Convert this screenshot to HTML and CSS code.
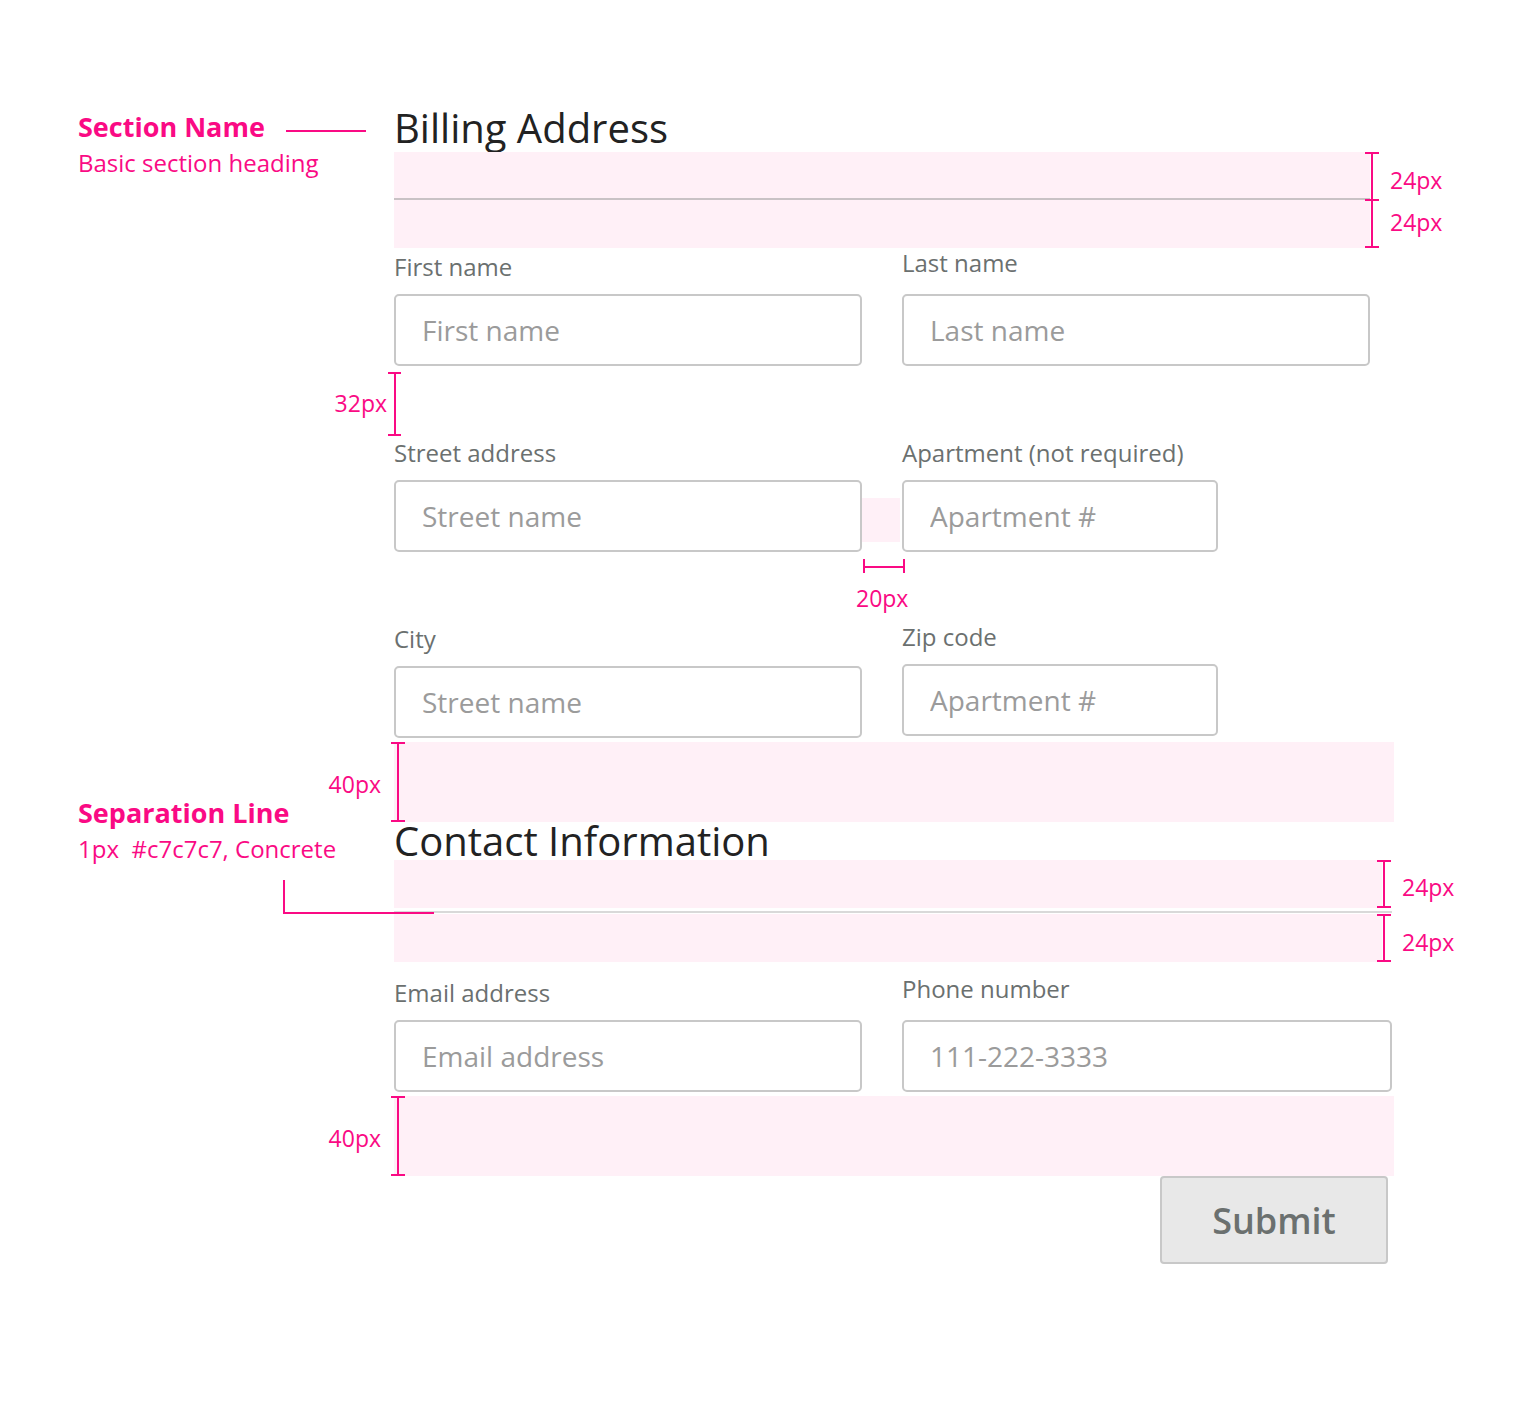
FILE: index.html
```html
<!DOCTYPE html>
<html lang="en">
<head>
<meta charset="utf-8">
<title>Form spec</title>
<link rel="stylesheet" href="styles.css">
</head>
<body>
<div class="canvas">
  <main class="form">
    <h2 class="section-title section-title--first">Billing Address</h2>
    <div class="divider">
      <div class="band band--46"></div>
      <div class="rule"></div>
      <div class="band band--48"></div>
    </div>

    <div class="row row--first">
      <div class="field">
        <label class="label">First name</label>
        <input class="input" placeholder="First name">
      </div>
      <div class="field">
        <label class="label label--up">Last name</label>
        <input class="input" placeholder="Last name">
      </div>
    </div>

    <div class="row">
      <div class="field">
        <label class="label">Street address</label>
        <input class="input" placeholder="Street name">
      </div>
      <div class="field">
        <label class="label">Apartment (not required)</label>
        <input class="input input--short" placeholder="Apartment #">
      </div>
    </div>

    <div class="row">
      <div class="field">
        <label class="label">City</label>
        <input class="input" placeholder="Street name">
      </div>
      <div class="field field--up">
        <label class="label">Zip code</label>
        <input class="input input--short" placeholder="Apartment #">
      </div>
    </div>

    <div class="band band--40"></div>

    <h2 class="section-title">Contact Information</h2>
    <div class="divider divider--wide">
      <div class="band band--48"></div>
      <div class="rule rule--light"></div>
      <div class="band band--48"></div>
    </div>

    <div class="row row--contact">
      <div class="field">
        <label class="label">Email address</label>
        <input class="input" placeholder="Email address">
      </div>
      <div class="field">
        <label class="label label--up">Phone number</label>
        <input class="input input--wide" placeholder="111-222-3333">
      </div>
    </div>

    <div class="band band--40"></div>

    <div class="actions">
      <button class="submit" type="button">Submit</button>
    </div>
  </main>

  <div class="gap-mark"></div>

  <svg class="marks" width="1520" height="1404" viewBox="0 0 1520 1404" aria-hidden="true">
    <g stroke="#fa0a84" stroke-width="2" fill="none">
      <line x1="286" y1="131" x2="366" y2="131"/>
      <!-- billing 24/24 -->
      <line x1="1372" y1="152" x2="1372" y2="248"/>
      <line x1="1365" y1="153" x2="1379" y2="153"/>
      <line x1="1365" y1="200" x2="1379" y2="200"/>
      <line x1="1365" y1="247" x2="1379" y2="247"/>
      <!-- 32px -->
      <line x1="395" y1="372" x2="395" y2="436"/>
      <line x1="388" y1="373" x2="401" y2="373"/>
      <line x1="388" y1="435" x2="401" y2="435"/>
      <!-- 20px -->
      <line x1="863" y1="567" x2="904" y2="567"/>
      <line x1="864" y1="559" x2="864" y2="573"/>
      <line x1="904" y1="559" x2="904" y2="573"/>
      <!-- 40px -->
      <line x1="398" y1="742" x2="398" y2="822"/>
      <line x1="391" y1="743" x2="405" y2="743"/>
      <line x1="391" y1="821" x2="405" y2="821"/>
      <!-- contact 24/24 -->
      <line x1="1384" y1="860" x2="1384" y2="908"/>
      <line x1="1377" y1="861" x2="1391" y2="861"/>
      <line x1="1377" y1="907" x2="1391" y2="907"/>
      <line x1="1384" y1="914" x2="1384" y2="962"/>
      <line x1="1377" y1="915" x2="1391" y2="915"/>
      <line x1="1377" y1="961" x2="1391" y2="961"/>
      <!-- 40px -->
      <line x1="398" y1="1096" x2="398" y2="1176"/>
      <line x1="391" y1="1097" x2="405" y2="1097"/>
      <line x1="391" y1="1175" x2="405" y2="1175"/>
      <!-- separation connector -->
      <polyline points="284,880 284,913 434,913"/>
    </g>
  </svg>

  <div class="note note--section">
    <div class="note-title">Section Name</div>
    <div class="note-text">Basic section heading</div>
  </div>
  <div class="note note--separation">
    <div class="note-title">Separation Line</div>
    <div class="note-text">1px&nbsp;&nbsp;#c7c7c7, Concrete</div>
  </div>

  <span class="mlabel mlabel--b1">24px</span>
  <span class="mlabel mlabel--b2">24px</span>
  <span class="mlabel mlabel--32">32px</span>
  <span class="mlabel mlabel--20">20px</span>
  <span class="mlabel mlabel--40a">40px</span>
  <span class="mlabel mlabel--c1">24px</span>
  <span class="mlabel mlabel--c2">24px</span>
  <span class="mlabel mlabel--40b">40px</span>
</div>
</body>
</html>
```

FILE: styles.css
```css
* { box-sizing: border-box; }

html, body {
  margin: 0;
  padding: 0;
  background: #ffffff;
}

body {
  font-family: "Open Sans", "Noto Sans", sans-serif;
  color: #222222;
}

.canvas {
  position: relative;
  width: 1520px;
  height: 1404px;
  overflow: hidden;
  padding-top: 109px;
}

.form {
  margin-left: 394px;
  width: 1000px;
  display: flex;
  flex-direction: column;
}

.section-title {
  margin: 0;
  font-size: 40px;
  line-height: 38px;
  font-weight: 400;
  color: #222222;
}

.section-title--first {
  margin-bottom: 5px;
}

.divider {
  width: 976px;
  display: flex;
  flex-direction: column;
}

.divider--wide {
  width: 998px;
}

.divider--wide .band {
  width: 988px;
}

.band {
  background: #fff0f7;
}

.band--46 { height: 46px; }
.band--48 { height: 48px; }
.band--40 { height: 80px; margin-top: 4px; width: 1000px; }

.rule {
  height: 2px;
  background: #c9c2c5;
}

.rule--light {
  background: #d9d9d9;
  margin: 3px 0 1px;
}

.row {
  display: grid;
  grid-template-columns: 468px 468px;
  column-gap: 40px;
  align-items: start;
  margin-top: 71px;
}

.row--first { margin-top: 3px; }
.row--contact { margin-top: 15px; }

.field {
  display: flex;
  flex-direction: column;
}

.field--up { margin-top: -2px; }

.label {
  display: block;
  font-size: 24px;
  line-height: 32px;
  margin-bottom: 11px;
  color: #6b706f;
}

.label--up {
  margin-top: -4px;
  margin-bottom: 15px;
}

.input {
  width: 468px;
  height: 72px;
  border: 2px solid #c8c8c8;
  border-radius: 5px;
  padding: 0 26px;
  font-family: "Open Sans", "Noto Sans", sans-serif;
  font-size: 28px;
  color: #333333;
  background: #ffffff;
  outline: none;
}

.input::placeholder {
  color: #9b9b9b;
  opacity: 1;
}

.input--short { width: 316px; }
.input--wide { width: 490px; }

.actions {
  display: flex;
  justify-content: flex-end;
  padding-right: 6px;
}

.submit {
  width: 228px;
  height: 88px;
  background: #e8e8e8;
  border: 2px solid #c8c8c8;
  border-radius: 4px;
  font-family: "Open Sans", "Noto Sans", sans-serif;
  font-size: 36px;
  font-weight: 600;
  color: #6b706f;
  padding: 0;
}

/* annotation layer */
.gap-mark {
  position: absolute;
  left: 862px;
  top: 498px;
  width: 38px;
  height: 44px;
  background: #fff0f7;
}

.marks {
  position: absolute;
  left: 0;
  top: 0;
  pointer-events: none;
}

.note {
  position: absolute;
  left: 78px;
  color: #fa0a84;
}

.note--section { top: 110px; }
.note--separation { top: 796px; }

.note-title {
  font-size: 27px;
  line-height: 34px;
  font-weight: 700;
}

.note-text {
  font-size: 24px;
  line-height: 34px;
  margin-top: 2px;
}

.mlabel {
  position: absolute;
  font-size: 23px;
  line-height: 30px;
  color: #fa0a84;
  white-space: nowrap;
}

.mlabel--b1 { left: 1390px; top: 165px; }
.mlabel--b2 { left: 1390px; top: 207px; }
.mlabel--c1 { left: 1402px; top: 872px; }
.mlabel--c2 { left: 1402px; top: 927px; }
.mlabel--32 { right: 1133px; top: 388px; }
.mlabel--20 { left: 856px; top: 583px; }
.mlabel--40a { right: 1139px; top: 769px; }
.mlabel--40b { right: 1139px; top: 1123px; }
```
